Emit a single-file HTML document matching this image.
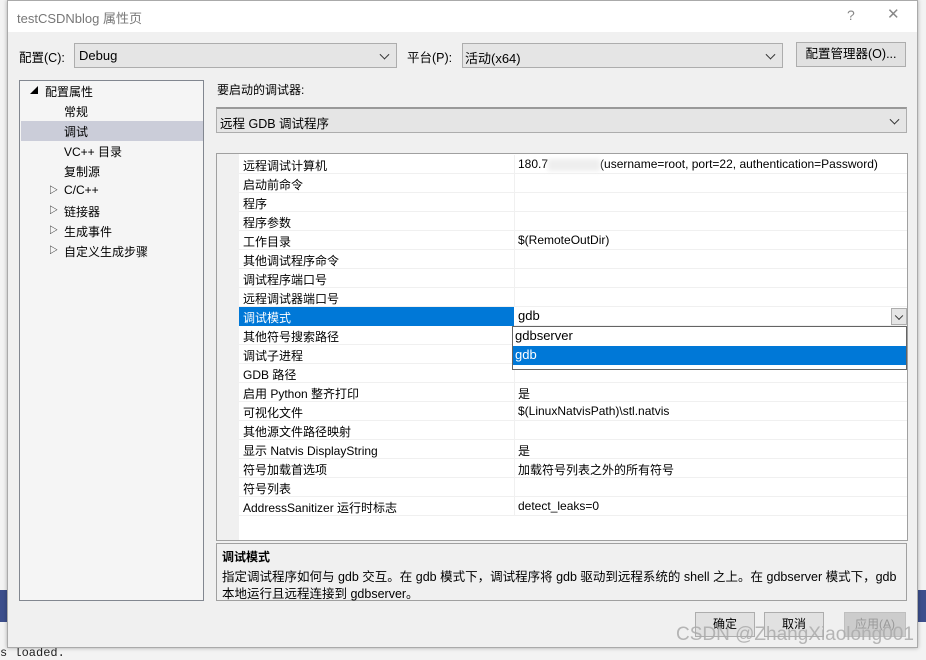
<!DOCTYPE html>
<html><head><meta charset="utf-8"><style>
*{margin:0;padding:0;box-sizing:border-box}
body{width:926px;height:657px;overflow:hidden;background:#f3f3f3;position:relative;font-family:"Liberation Sans","Noto Sans CJK SC",sans-serif;font-size:12px;color:#000}
.a{position:absolute}
.dlg{left:7px;top:0;width:911px;height:648px;background:#f0f0f0;border:1px solid #aaa;box-shadow:0 0 4px rgba(0,0,0,.3)}
.combo{background:#e5e5e5;border:1px solid #adadad;}
.chev{position:absolute;right:8px;top:50%;width:7px;height:7px;border-right:1px solid #333;border-bottom:1px solid #333;transform:translateY(-70%) rotate(45deg)}
.row{position:absolute;left:22px;width:669px;height:19px;border-bottom:1px solid #f0f0f0}
.row .n{position:absolute;left:4px;top:2px}
.row .v{position:absolute;left:279px;top:2px;white-space:nowrap}
.row .sep{position:absolute;left:275px;top:0;width:1px;height:19px;background:#f0f0f0}
.tree div{position:absolute;white-space:nowrap}
.btn{background:#e1e1e1;border:1px solid #adadad;text-align:center;line-height:22px}
</style></head><body>
<div class="a" style="left:0;top:590px;width:7px;height:32px;background:#3d4f8c"></div>
<div class="a" style="left:918px;top:590px;width:8px;height:32px;background:#3d4f8c"></div>
<div class="a" style="left:0;top:646px;font-family:'Liberation Mono',monospace;font-size:12px;color:#222">s loaded.</div>
<div class="a dlg">
 <div class="a" style="left:0;top:0;width:909px;height:31px;background:#fff"></div>
 <div class="a" style="left:9px;top:7px;font-size:13px;color:#777">testCSDNblog 属性页</div>
 <div class="a" style="left:839px;top:6px;font-size:14px;color:#888">?</div>
 <div class="a" style="left:879px;top:4px;font-size:15px;color:#888">✕</div>
</div>
<div class="a" style="left:19px;top:47px;font-size:12.5px">配置(C):</div>
<div class="a combo" style="left:74px;top:43px;width:323px;height:25px"><span class="a" style="left:4px;top:4px;font-size:13px">Debug</span><span class="chev"></span></div>
<div class="a" style="left:407px;top:47px;font-size:12.5px">平台(P):</div>
<div class="a combo" style="left:462px;top:43px;width:321px;height:25px"><span class="a" style="left:2px;top:4px;font-size:13px">活动(x64)</span><span class="chev"></span></div>
<div class="a btn" style="left:796px;top:42px;width:110px;height:25px;font-size:12.5px">配置管理器(O)...</div>

<div class="a tree" style="left:19px;top:80px;width:185px;height:521px;background:#f5f5f5;border:1px solid #828790">
 <div style="left:1px;top:40px;width:182px;height:20px;background:#cbcdd9"></div>
 <div style="left:10px;top:4px;font-size:8px">◢</div>
 <div style="left:25px;top:2px">配置属性</div>
 <div style="left:44px;top:22px">常规</div>
 <div style="left:44px;top:42px">调试</div>
 <div style="left:44px;top:62px">VC++ 目录</div>
 <div style="left:44px;top:82px">复制源</div>
 <div style="left:29px;top:102px;font-size:9px">▷</div><div style="left:44px;top:102px">C/C++</div>
 <div style="left:29px;top:122px;font-size:9px">▷</div><div style="left:44px;top:122px">链接器</div>
 <div style="left:29px;top:142px;font-size:9px">▷</div><div style="left:44px;top:142px">生成事件</div>
 <div style="left:29px;top:162px;font-size:9px">▷</div><div style="left:44px;top:162px">自定义生成步骤</div>
</div>

<div class="a" style="left:217px;top:81px">要启动的调试器:</div>
<div class="a combo" style="left:216px;top:107px;width:691px;height:26px;border-top:2px solid #999"><span class="a" style="left:3px;top:4px;font-size:12.5px">远程 GDB 调试程序</span><span class="chev"></span></div>

<div class="a" style="left:216px;top:153px;width:691px;height:388px;background:#fff;border:1px solid #a0a0a0;border-right:none;overflow:hidden">
 <div class="a" style="left:0;top:0;width:22px;height:388px;background:#f0f0f0"></div>
 <div class="row" style="top:1px"><span class="sep"></span><span class="n">远程调试计算机</span><span class="v">180.7<span style="display:inline-block;width:52px;height:12px;background:#eee;vertical-align:middle;filter:blur(2px)"></span>(username=root, port=22, authentication=Password)</span></div>
 <div class="row" style="top:20px"><span class="sep"></span><span class="n">启动前命令</span></div>
 <div class="row" style="top:39px"><span class="sep"></span><span class="n">程序</span></div>
 <div class="row" style="top:58px"><span class="sep"></span><span class="n">程序参数</span></div>
 <div class="row" style="top:77px"><span class="sep"></span><span class="n">工作目录</span><span class="v">$(RemoteOutDir)</span></div>
 <div class="row" style="top:96px"><span class="sep"></span><span class="n">其他调试程序命令</span></div>
 <div class="row" style="top:115px"><span class="sep"></span><span class="n">调试程序端口号</span></div>
 <div class="row" style="top:134px"><span class="sep"></span><span class="n">远程调试器端口号</span></div>
 <div class="row" style="top:153px"><span class="a" style="left:0;top:0;width:275px;height:19px;background:#0078d7"></span><span class="n" style="color:#fff">调试模式</span><span class="v" style="font-size:13px;top:1px">gdb</span>
  <span class="a" style="left:652px;top:1px;width:16px;height:17px;background:#e5e5e5;border:1px solid #adadad"><span class="chev" style="right:4px;width:6px;height:6px"></span></span></div>
 <div class="row" style="top:172px"><span class="sep"></span><span class="n">其他符号搜索路径</span></div>
 <div class="row" style="top:191px"><span class="sep"></span><span class="n">调试子进程</span></div>
 <div class="row" style="top:210px"><span class="sep"></span><span class="n">GDB 路径</span></div>
 <div class="row" style="top:229px"><span class="sep"></span><span class="n">启用 Python 整齐打印</span><span class="v">是</span></div>
 <div class="row" style="top:248px"><span class="sep"></span><span class="n">可视化文件</span><span class="v">$(LinuxNatvisPath)\stl.natvis</span></div>
 <div class="row" style="top:267px"><span class="sep"></span><span class="n">其他源文件路径映射</span></div>
 <div class="row" style="top:286px"><span class="sep"></span><span class="n">显示 Natvis DisplayString</span><span class="v">是</span></div>
 <div class="row" style="top:305px"><span class="sep"></span><span class="n">符号加载首选项</span><span class="v">加载符号列表之外的所有符号</span></div>
 <div class="row" style="top:324px"><span class="sep"></span><span class="n">符号列表</span></div>
 <div class="row" style="top:343px"><span class="sep"></span><span class="n">AddressSanitizer 运行时标志</span><span class="v">detect_leaks=0</span></div>
</div>
<div class="a" style="left:907px;top:153px;width:1px;height:388px;background:#a0a0a0"></div>
<div class="a" style="left:512px;top:326px;width:395px;height:44px;background:#fff;border:1px solid #646464">
 <div class="a" style="left:2px;top:1px;font-size:13px">gdbserver</div>
 <div class="a" style="left:0;top:19px;width:393px;height:19px;background:#0078d7;color:#fff;font-size:13px;padding-left:2px;line-height:18px">gdb</div>
</div>

<div class="a" style="left:216px;top:543px;width:691px;height:58px;border:1px solid #a0a0a0;background:#f0f0f0">
 <div class="a" style="left:5px;top:4px;font-weight:bold">调试模式</div>
 <div class="a" style="left:5px;top:22px;white-space:nowrap;font-size:12.5px">指定调试程序如何与 gdb 交互。在 gdb 模式下，调试程序将 gdb 驱动到远程系统的 shell 之上。在 gdbserver 模式下，gdb</div>
 <div class="a" style="left:5px;top:39px;font-size:12.5px">本地运行且远程连接到 gdbserver。</div>
</div>

<div class="a btn" style="left:695px;top:612px;width:60px;height:25px">确定</div>
<div class="a btn" style="left:764px;top:612px;width:60px;height:25px">取消</div>
<div class="a btn" style="left:844px;top:612px;width:62px;height:25px;background:#ccc;border-color:#bfbfbf;color:#999">应用(A)</div>
<div class="a" style="left:676px;top:624px;font-size:19px;color:rgba(170,170,170,.85);white-space:nowrap">CSDN @ZhangXiaolong001</div>
</body></html>
